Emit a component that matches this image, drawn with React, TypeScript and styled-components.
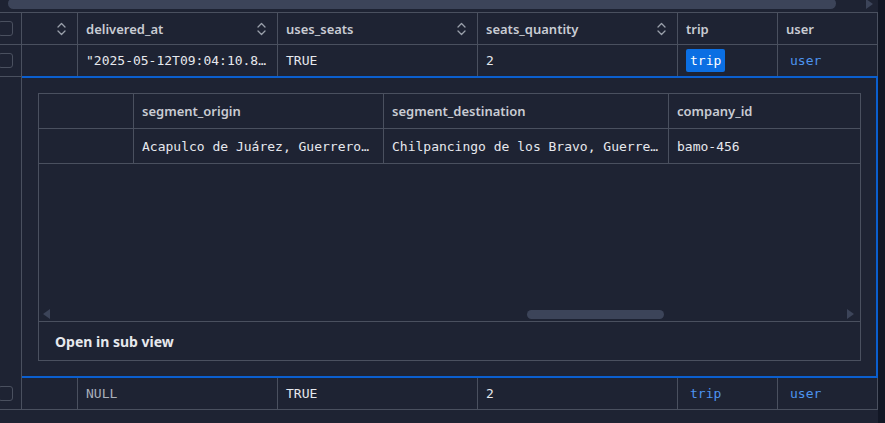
import React from "react";
import styled, { createGlobalStyle } from "styled-components";

const C = {
  bg: "#1e2333",
  strip: "#121725",
  line: "#4a505f",
  blue: "#0b5fcf",
  head: "#c9ccd3",
  text: "#e6e8ed",
  muted: "#aab0bb",
  link: "#4d94ef",
  badge: "#0b6fe3",
  scroll: "#3c4459",
};

const Global = createGlobalStyle`
  * { box-sizing: border-box; }
  html, body { margin: 0; padding: 0; background: ${C.bg}; overflow: hidden; }
  body { font-family: "Noto Sans", "Open Sans", sans-serif; }
`;

const Page = styled.div`
  display: flex;
  width: 885px;
  height: 423px;
  background: ${C.bg};
`;

const Main = styled.div`
  width: 878px;
  display: flex;
  flex-direction: column;
`;

const Strip = styled.div`
  flex: 1;
  background: ${C.strip};
`;

const TopScroll = styled.div`
  height: 12px;
  display: flex;
  align-items: flex-start;
  overflow: hidden;
`;

const TopThumb = styled.div`
  margin-left: 8px;
  margin-top: -2px;
  width: 828px;
  height: 11px;
  border-radius: 6px;
  background: ${C.scroll};
`;

const Spacer = styled.div`
  flex: 1;
`;

const ArrowRight = styled.div<{ $mt?: number }>`
  width: 0;
  height: 0;
  margin-top: ${(p) => p.$mt ?? 0}px;
  border-top: 5px solid transparent;
  border-bottom: 5px solid transparent;
  border-left: 7px solid ${C.scroll};
`;

const ArrowLeft = styled.div`
  width: 0;
  height: 0;
  border-top: 5px solid transparent;
  border-bottom: 5px solid transparent;
  border-right: 7px solid ${C.scroll};
`;

const TopArrowWrap = styled.div`
  margin-right: 5px;
`;

const HeaderRow = styled.div`
  display: flex;
  border-top: 1px solid ${C.line};
`;

const Row = styled.div`
  display: flex;
`;

const Cell = styled.div<{ $w: number; $pl?: number }>`
  width: ${(p) => p.$w}px;
  height: 32px;
  flex: none;
  border-right: 1px solid ${C.line};
  border-bottom: 1px solid ${C.line};
  display: flex;
  align-items: center;
  padding-left: ${(p) => p.$pl ?? 8}px;
  overflow: hidden;
`;

const HeadCell = styled(Cell)<{ $end?: boolean }>`
  justify-content: ${(p) => (p.$end ? "flex-end" : "space-between")};
  padding-right: 11px;
`;

const CheckCell = styled(Cell)`
  padding-left: 0;
`;

const Checkbox = styled.div`
  width: 15px;
  height: 15px;
  margin-left: -2px;
  border: 1px solid ${C.line};
  border-radius: 3px;
`;

const HeadLabel = styled.span`
  font-family: "Noto Sans", "Open Sans", sans-serif;
  font-weight: 600;
  font-size: 13px;
  color: ${C.head};
  white-space: nowrap;
`;

const Value = styled.span<{ $muted?: boolean }>`
  font-family: "DejaVu Sans Mono", "Liberation Mono", monospace;
  font-size: 13px;
  color: ${(p) => (p.$muted ? C.muted : C.text)};
  white-space: nowrap;
`;

const Link = styled.span<{ $active?: boolean }>`
  font-family: "DejaVu Sans Mono", "Liberation Mono", monospace;
  font-size: 13px;
  line-height: 23px;
  height: 23px;
  padding: 0 4px;
  border-radius: 2px;
  color: ${(p) => (p.$active ? "#ffffff" : C.link)};
  background: ${(p) => (p.$active ? C.badge : "transparent")};
`;

const ExpandRow = styled.div`
  display: flex;
`;

const SideCell = styled.div`
  width: 22px;
  flex: none;
  border-right: 1px solid ${C.line};
`;

const Panel = styled.div`
  flex: 1;
  margin-top: -1px;
  border: 2px solid ${C.blue};
  border-left: none;
  padding: 15px 15px 15px 16px;
`;

const Box = styled.div`
  height: 268px;
  border: 1px solid ${C.line};
  display: flex;
  flex-direction: column;
`;

const SubRow = styled.div`
  display: flex;
  height: 35px;
  flex: none;
  border-bottom: 1px solid ${C.line};
`;

const SubCell = styled.div<{ $w?: number }>`
  ${(p) => (p.$w ? `width: ${p.$w}px; flex: none; border-right: 1px solid ${C.line};` : "flex: 1; min-width: 0;")}
  display: flex;
  align-items: center;
  padding-left: 8px;
  overflow: hidden;
`;

const Filler = styled.div`
  flex: 1;
  display: flex;
  align-items: flex-end;
`;

const SubScroll = styled.div`
  height: 14px;
  width: 100%;
  display: flex;
  align-items: center;
  padding: 0 6px 0 4px;
`;

const Track = styled.div`
  flex: 1;
  display: flex;
  align-items: center;
  padding-left: 477px;
`;

const SubThumb = styled.div`
  width: 137px;
  height: 9px;
  border-radius: 5px;
  background: ${C.scroll};
`;

const Footer = styled.div`
  height: 39px;
  flex: none;
  border-top: 1px solid ${C.line};
  display: flex;
  align-items: center;
  padding-left: 16px;
  font-family: "Noto Sans", "Open Sans", sans-serif;
  font-weight: 700;
  font-size: 14px;
  color: ${C.text};
`;

const SortIcon = () => (
  <svg width="9" height="14" viewBox="0 0 9 14" fill="none">
    <path d="M1 5 L4.5 1.5 L8 5" stroke="#9aa0ab" strokeWidth="1.3" strokeLinecap="round" strokeLinejoin="round" />
    <path d="M1 9 L4.5 12.5 L8 9" stroke="#9aa0ab" strokeWidth="1.3" strokeLinecap="round" strokeLinejoin="round" />
  </svg>
);

const cols = [
  { key: "delivered_at", w: 200, sort: true },
  { key: "uses_seats", w: 200, sort: true },
  { key: "seats_quantity", w: 200, sort: true },
  { key: "trip", w: 100, sort: false },
  { key: "user", w: 100, sort: false },
];

type RowData = { delivered: string | null; uses: string; qty: string; active: boolean };

const rows: RowData[] = [
  { delivered: '"2025-05-12T09:04:10.8…', uses: "TRUE", qty: "2", active: true },
  { delivered: null, uses: "TRUE", qty: "2", active: false },
];

const DataRow = ({ r }: { r: RowData }) => (
  <Row>
    <CheckCell $w={22}>
      <Checkbox />
    </CheckCell>
    <Cell $w={56} />
    <Cell $w={200}>
      {r.delivered === null ? <Value $muted>NULL</Value> : <Value>{r.delivered}</Value>}
    </Cell>
    <Cell $w={200}>
      <Value>{r.uses}</Value>
    </Cell>
    <Cell $w={200}>
      <Value>{r.qty}</Value>
    </Cell>
    <Cell $w={100}>
      <Link $active={r.active}>trip</Link>
    </Cell>
    <Cell $w={100}>
      <Link>user</Link>
    </Cell>
  </Row>
);

export default function App() {
  return (
    <>
      <Global />
      <Page>
        <Main>
          <TopScroll>
            <TopThumb />
            <Spacer />
            <TopArrowWrap>
              <ArrowRight $mt={-1} />
            </TopArrowWrap>
          </TopScroll>
          <HeaderRow>
            <CheckCell $w={22}>
              <Checkbox />
            </CheckCell>
            <HeadCell $w={56} $end>
              <SortIcon />
            </HeadCell>
            {cols.map((c) => (
              <HeadCell key={c.key} $w={c.w}>
                <HeadLabel>{c.key}</HeadLabel>
                {c.sort && <SortIcon />}
              </HeadCell>
            ))}
          </HeaderRow>
          <DataRow r={rows[0]} />
          <ExpandRow>
            <SideCell />
            <Panel>
              <Box>
                <SubRow>
                  <SubCell $w={95} />
                  <SubCell $w={250}>
                    <HeadLabel>segment_origin</HeadLabel>
                  </SubCell>
                  <SubCell $w={285}>
                    <HeadLabel>segment_destination</HeadLabel>
                  </SubCell>
                  <SubCell>
                    <HeadLabel>company_id</HeadLabel>
                  </SubCell>
                </SubRow>
                <SubRow>
                  <SubCell $w={95} />
                  <SubCell $w={250}>
                    <Value>Acapulco de Juárez, Guerrero…</Value>
                  </SubCell>
                  <SubCell $w={285}>
                    <Value>Chilpancingo de los Bravo, Guerre…</Value>
                  </SubCell>
                  <SubCell>
                    <Value>bamo-456</Value>
                  </SubCell>
                </SubRow>
                <Filler>
                  <SubScroll>
                    <ArrowLeft />
                    <Track>
                      <SubThumb />
                    </Track>
                    <ArrowRight />
                  </SubScroll>
                </Filler>
                <Footer>Open in sub view</Footer>
              </Box>
            </Panel>
          </ExpandRow>
          <DataRow r={rows[1]} />
        </Main>
        <Strip />
      </Page>
    </>
  );
}
